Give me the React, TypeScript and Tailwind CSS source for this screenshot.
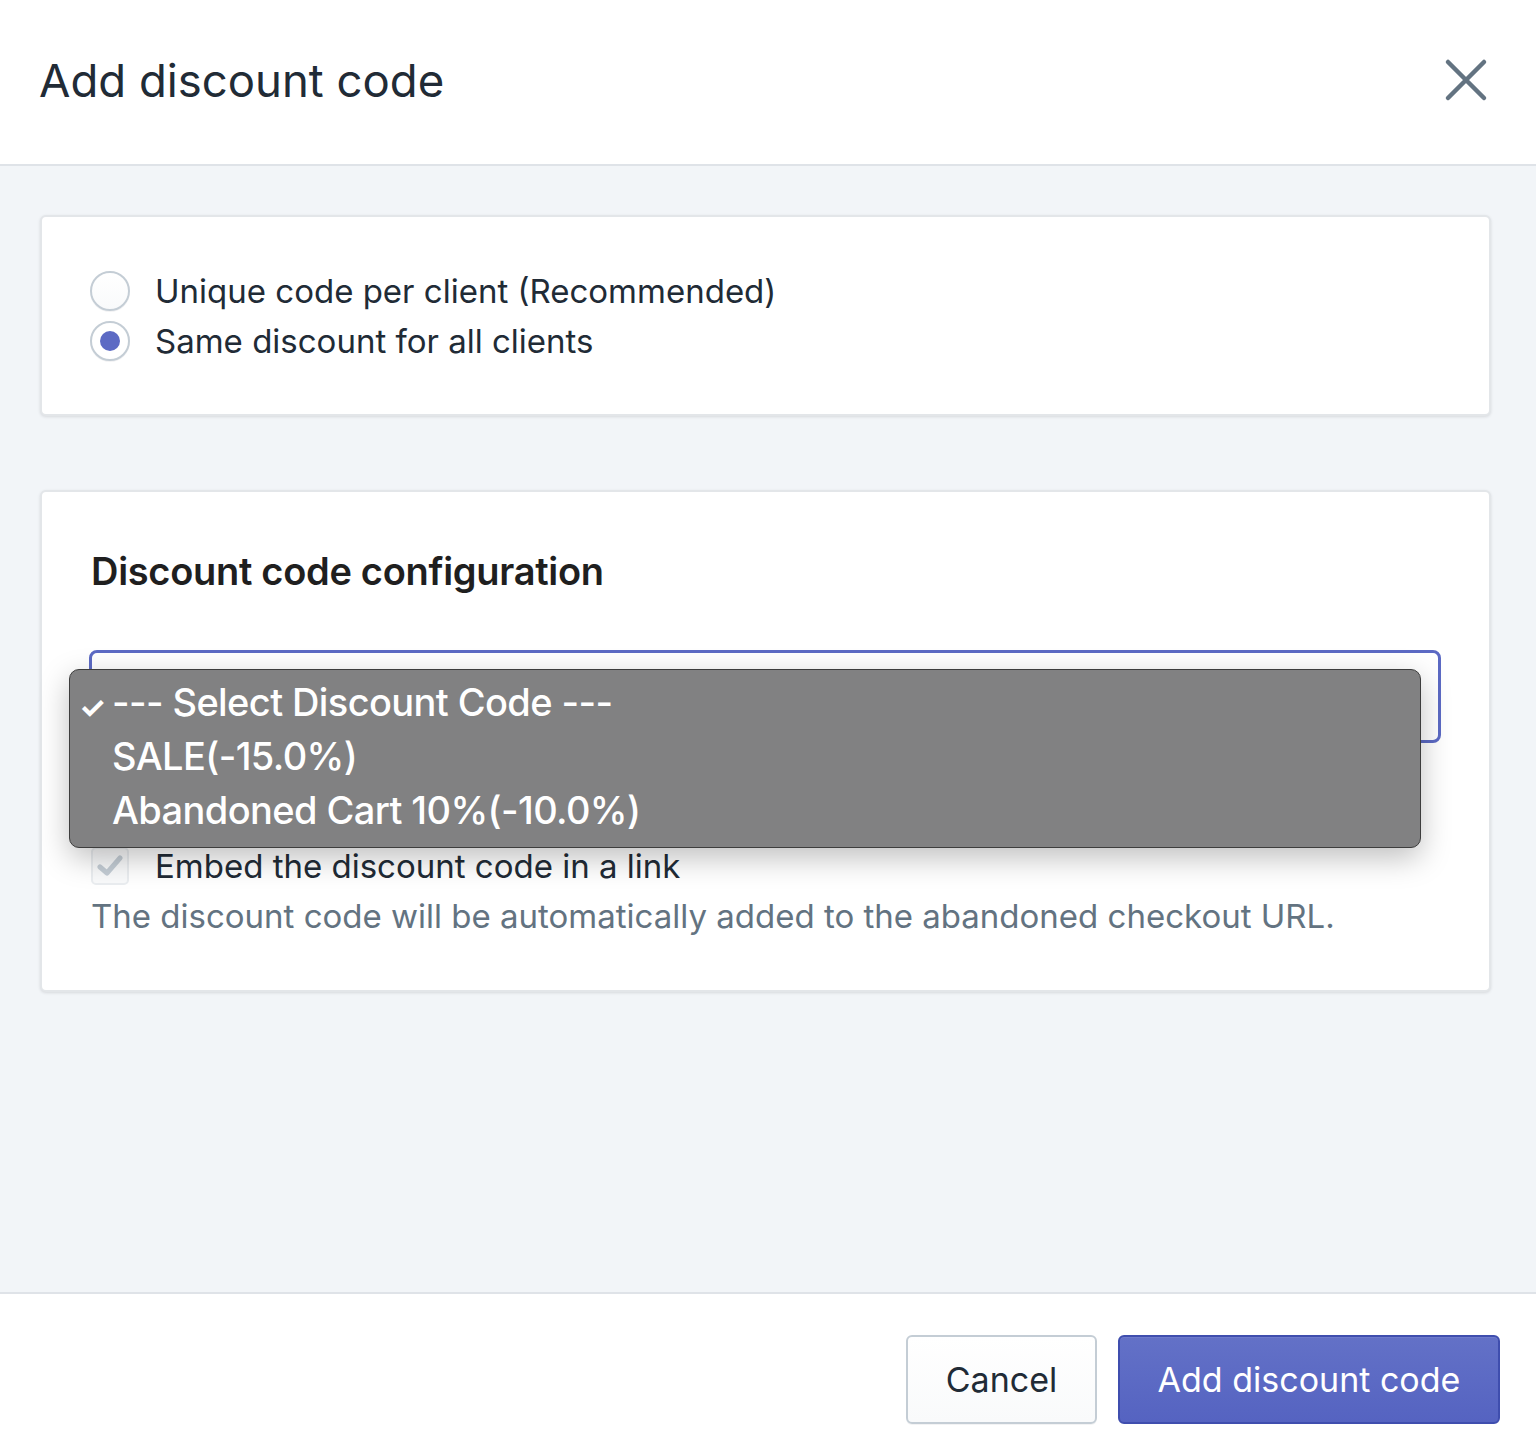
import React from "react";

export default function App() {
  const font = { fontFamily: "Inter, 'Noto Sans', 'Liberation Sans', sans-serif" };
  return (
    <div className="w-[1536px] h-[1456px] flex flex-col bg-white text-[#212b36]" style={font}>
      {/* Header */}
      <div className="h-[166px] shrink-0 flex items-center justify-between pl-[39px] pr-[48px] border-b-2 border-[#dfe3e8]">
        <h1 className="text-[45.5px] font-normal leading-none mt-[-2px]">Add discount code</h1>
        <svg width="44" height="44" viewBox="0 0 44 44" className="mt-[-4px]">
          <path d="M4 4 L40 40 M40 4 L4 40" stroke="#637381" strokeWidth="4.5" strokeLinecap="round" />
        </svg>
      </div>

      {/* Body */}
      <div className="flex-1 bg-[#f2f5f8] pt-[49px] pl-[40px] pr-[45px] flex flex-col">
        {/* Card 1 */}
        <div className="bg-white rounded-[6px] border-2 border-[#e3e6e9] shadow-[0_1px_3px_rgba(63,63,68,0.15)] h-[201px] pl-[48px] pt-[49px] flex flex-col">
          <label className="flex items-center h-[50px]">
            <span className="w-[40px] h-[40px] rounded-full border-2 border-[#c4cdd5] bg-gradient-to-b from-white to-[#f9fafb] shadow-[0_1px_0_rgba(22,29,37,0.05)]" />
            <span className="ml-[25px] text-[33px] leading-none">Unique code per client (Recommended)</span>
          </label>
          <label className="flex items-center h-[50px]">
            <span className="w-[40px] h-[40px] rounded-full border-2 border-[#c4cdd5] bg-white flex items-center justify-center shadow-[0_1px_0_rgba(22,29,37,0.05)]">
              <span className="w-[20px] h-[20px] rounded-full bg-[#5c6ac4]" />
            </span>
            <span className="ml-[25px] text-[33px] leading-none">Same discount for all clients</span>
          </label>
        </div>

        {/* Card 2 */}
        <div className="mt-[74px] bg-white rounded-[6px] border-2 border-[#e3e6e9] shadow-[0_1px_3px_rgba(63,63,68,0.15)] h-[502px] pl-[49px] pr-[48px] pt-[54px] flex flex-col">
          <h2 className="text-[38px] font-semibold leading-[50px] text-[#1f1f1f] tracking-[-0.3px]">Discount code configuration</h2>
          <div className="relative mt-[54px] ml-[-2px]">
            <div className="h-[93px] rounded-[8px] border-[3px] border-[#5c6ac4] bg-white" />
            <div className="absolute left-[-20px] top-[19px] w-[1352px] h-[179px] rounded-[10px] border border-[#3d3d3d] bg-[#818182] shadow-[0_10px_30px_rgba(0,0,0,0.25)] pt-[6px] text-white font-medium text-[38px] tracking-[-0.6px]">
              <div className="h-[53px] flex items-center relative pl-[42px]">
                <span className="absolute left-[9px] text-[30px] font-bold top-[9px]">✓</span>
                --- Select Discount Code ---
              </div>
              <div className="h-[54px] flex items-center pl-[42px]">SALE(-15.0%)</div>
              <div className="h-[54px] flex items-center pl-[42px]">Abandoned Cart 10%(-10.0%)</div>
            </div>
          </div>
          <div className="mt-[98px] flex items-center h-[50px]">
            <span className="w-[38px] h-[38px] rounded-[5px] border-2 border-[#eaedf0] bg-[#f9fafb] flex items-center justify-center">
              <svg width="26" height="22" viewBox="0 0 26 22">
                <path d="M3 12 L10 18 L23 3" stroke="#c4cdd5" strokeWidth="5" fill="none" strokeLinecap="round" strokeLinejoin="round" />
              </svg>
            </span>
            <span className="ml-[26px] text-[33px] leading-none">Embed the discount code in a link</span>
          </div>
          <p className="text-[33px] leading-[50px] text-[#637381]">The discount code will be automatically added to the abandoned checkout URL.</p>
        </div>
      </div>

      {/* Footer */}
      <div className="h-[164px] shrink-0 border-t-2 border-[#dfe3e8] flex items-start pt-[41px] justify-end pr-[36px] gap-[21px]">
        <button className="w-[191px] h-[89px] rounded-[6px] border-2 border-[#c4cdd5] bg-gradient-to-b from-white to-[#f9fafb] shadow-[0_1px_0_rgba(22,29,37,0.05)] text-[34px] text-[#212b36]">Cancel</button>
        <button className="w-[382px] h-[89px] rounded-[6px] border-2 border-[#3f4eae] bg-gradient-to-b from-[#6371c7] to-[#5563c1] shadow-[inset_0_1px_0_0_#6f7bcb] text-[34px] text-white">Add discount code</button>
      </div>
    </div>
  );
}
